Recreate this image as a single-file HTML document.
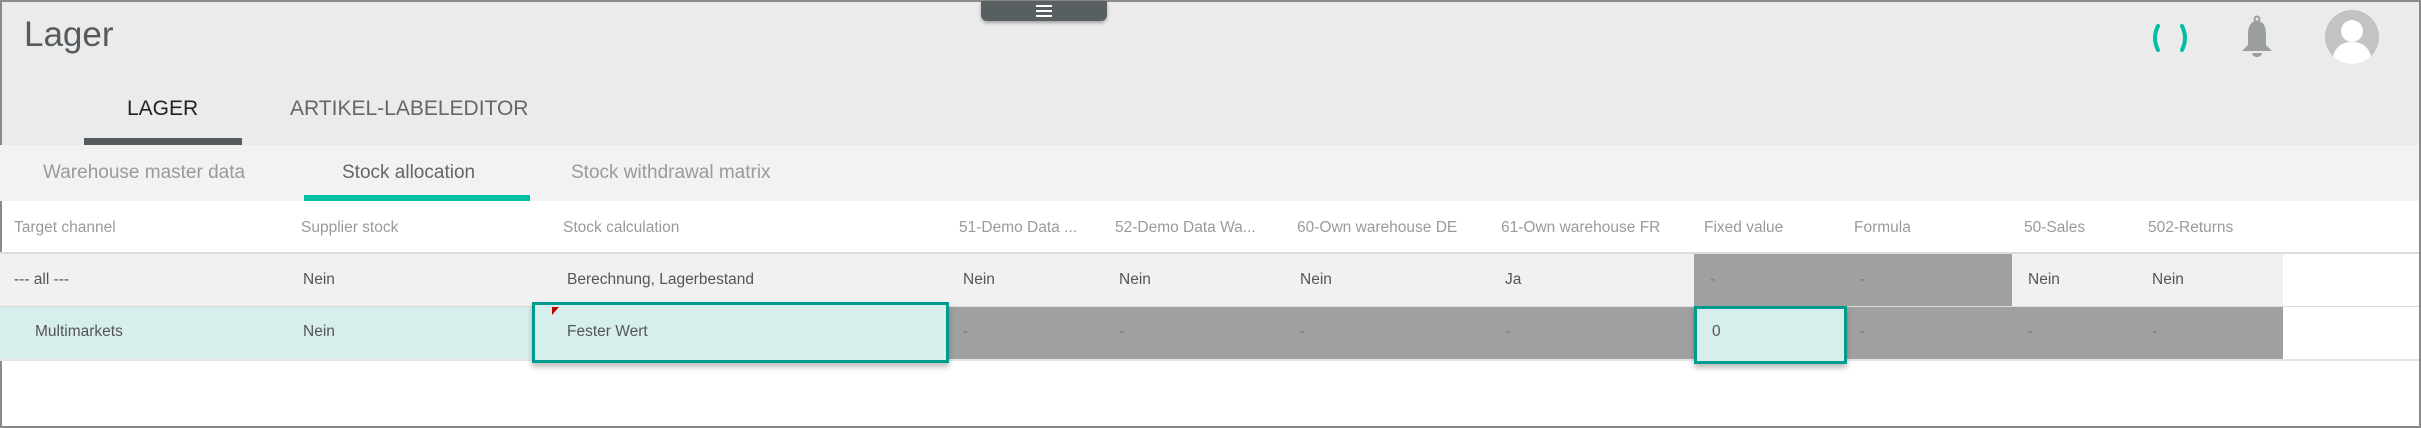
<!DOCTYPE html>
<html><head><meta charset="utf-8"><style>
*{margin:0;padding:0;box-sizing:border-box}
body{width:2421px;height:428px;overflow:hidden;background:#fff;font-family:"Liberation Sans",sans-serif;position:relative}
.a{position:absolute;white-space:nowrap}
.h{font-size:15.5px;color:#9a9a9a;top:219px}
.r1{font-size:15.5px;color:#555;top:271px}
.r2{font-size:15.5px;color:#555;top:323px}
.d{color:#777}
</style></head><body>
<div class="a" style="left:0;top:0;width:2421px;height:145px;background:#ebebeb"></div>
<div class="a" style="left:0;top:0;width:2421px;height:2px;background:#8a8a8a"></div>
<div class="a" style="left:2419px;top:0;width:2px;height:428px;background:#8a8a8a"></div>
<div class="a" style="left:0;top:426px;width:2421px;height:2px;background:#8a8a8a"></div>
<div class="a" style="left:0;top:0;width:2px;height:428px;background:#8a8a8a"></div>
<div class="a" style="left:24px;top:15px;font-size:35px;color:#555b5e;font-weight:300">Lager</div>
<div class="a" style="left:981px;top:1px;width:126px;height:20px;background:#575f60;border-radius:0 0 6px 6px;box-shadow:0 2px 3px rgba(0,0,0,.3)"></div>
<div class="a" style="left:1036px;top:5px;width:16px;height:2px;background:#fff"></div>
<div class="a" style="left:1036px;top:10px;width:16px;height:2px;background:#fff"></div>
<div class="a" style="left:1036px;top:15px;width:16px;height:2px;background:#fff"></div>
<svg class="a" style="left:2148px;top:22px" width="45" height="32" viewBox="0 0 45 32"><path d="M10 4 Q4 16 10 28" stroke="#00bfa5" stroke-width="4" fill="none" stroke-linecap="round"/><path d="M34 4 Q40 16 34 28" stroke="#00bfa5" stroke-width="4" fill="none" stroke-linecap="round"/></svg>
<svg class="a" style="left:2238px;top:15px" width="38" height="44" viewBox="0 0 38 44"><circle cx="19" cy="4" r="2.5" fill="none" stroke="#9a9e9e" stroke-width="2"/><path d="M19 6 C11 6 10 14 10 22 L10 30 L4 36 L34 36 L28 30 L28 22 C28 14 27 6 19 6Z" fill="#9a9e9e"/><path d="M14 38 h10 a5 4 0 0 1 -10 0Z" fill="#9a9e9e"/></svg>
<svg class="a" style="left:2325px;top:10px" width="54" height="54" viewBox="0 0 54 54"><circle cx="27" cy="27" r="27" fill="#c3c3c3"/><circle cx="27" cy="21" r="11" fill="#fff"/><path d="M8 46 Q12 32 27 32 Q42 32 46 46 Q38 54 27 54 Q16 54 8 46Z" fill="#fff"/></svg>
<div class="a" style="left:127px;top:97px;font-size:21px;color:#222">LAGER</div>
<div class="a" style="left:290px;top:97px;font-size:21px;color:#666">ARTIKEL-LABELEDITOR</div>
<div class="a" style="left:84px;top:138px;width:158px;height:7px;background:#555b5e"></div>
<div class="a" style="left:0;top:145px;width:2419px;height:56px;background:#f2f2f2"></div>
<div class="a" style="left:43px;top:162px;font-size:19px;color:#9a9a9a">Warehouse master data</div>
<div class="a" style="left:342px;top:162px;font-size:19px;color:#666">Stock allocation</div>
<div class="a" style="left:571px;top:162px;font-size:19px;color:#9a9a9a">Stock withdrawal matrix</div>
<div class="a" style="left:304px;top:195px;width:226px;height:6px;background:#00bfa5"></div>
<div class="a h" style="left:14px">Target channel</div>
<div class="a h" style="left:301px">Supplier stock</div>
<div class="a h" style="left:563px">Stock calculation</div>
<div class="a h" style="left:959px">51-Demo Data ...</div>
<div class="a h" style="left:1115px;width:165px;overflow:hidden">52-Demo Data Wa...</div>
<div class="a h" style="left:1297px">60-Own warehouse DE</div>
<div class="a h" style="left:1501px">61-Own warehouse FR</div>
<div class="a h" style="left:1704px">Fixed value</div>
<div class="a h" style="left:1854px">Formula</div>
<div class="a h" style="left:2024px">50-Sales</div>
<div class="a h" style="left:2148px">502-Returns</div>
<div class="a" style="left:0;top:252px;width:2419px;height:2px;background:#dcdcdc"></div>
<div class="a" style="left:0;top:254px;width:2283px;height:52px;background:#f1f1f1"></div>
<div class="a" style="left:1694px;top:254px;width:318px;height:52px;background:#a0a0a0"></div>
<div class="a" style="left:0;top:306px;width:2419px;height:1px;background:#dcdcdc"></div>
<div class="a" style="left:0;top:307px;width:949px;height:52px;background:#d7efec"></div>
<div class="a" style="left:949px;top:307px;width:1334px;height:52px;background:#a0a0a0"></div>
<div class="a" style="left:0;top:359px;width:2419px;height:2px;background:#e4e4e4"></div>
<div class="a r1" style="left:14px">--- all ---</div>
<div class="a r1" style="left:303px">Nein</div>
<div class="a r1" style="left:567px">Berechnung, Lagerbestand</div>
<div class="a r1" style="left:963px">Nein</div>
<div class="a r1" style="left:1119px">Nein</div>
<div class="a r1" style="left:1300px">Nein</div>
<div class="a r1" style="left:1505px">Ja</div>
<div class="a r1 d" style="left:1710px">-</div>
<div class="a r1 d" style="left:1860px">-</div>
<div class="a r1" style="left:2028px">Nein</div>
<div class="a r1" style="left:2152px">Nein</div>
<div class="a" style="left:532px;top:302px;width:417px;height:61px;border:3px solid #009b8f;background:#d7efec;box-shadow:0 4px 5px rgba(0,0,0,.25)"></div>
<div class="a" style="left:1694px;top:306px;width:153px;height:58px;border:3px solid #009b8f;background:#d7efec;box-shadow:0 4px 5px rgba(0,0,0,.25)"></div>
<svg class="a" style="left:552px;top:307px" width="7" height="8"><path d="M0 0 H7 L0 8Z" fill="#b00"/></svg>
<div class="a r2" style="left:35px">Multimarkets</div>
<div class="a r2" style="left:303px">Nein</div>
<div class="a r2" style="left:567px">Fester Wert</div>
<div class="a r2 d" style="left:963px">-</div>
<div class="a r2 d" style="left:1119px">-</div>
<div class="a r2 d" style="left:1300px">-</div>
<div class="a r2 d" style="left:1505px">-</div>
<div class="a r2" style="left:1712px">0</div>
<div class="a r2 d" style="left:1860px">-</div>
<div class="a r2 d" style="left:2028px">-</div>
<div class="a r2 d" style="left:2152px">-</div>
</body></html>
